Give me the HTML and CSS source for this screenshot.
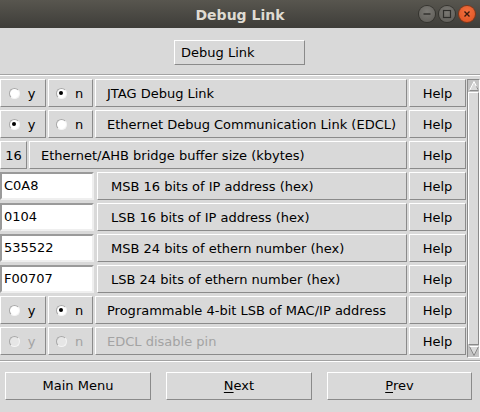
FILE: index.html
```html
<!DOCTYPE html>
<html>
<head>
<meta charset="utf-8">
<link rel="stylesheet" href="styles.css">
</head>
<body>
<div class="window">
  <div class="titlebar">
    <div></div>
    <div class="title">Debug Link</div>
    <div class="controls">
      <span class="wbtn min"><svg width="16" height="16" viewBox="0 0 16 16"><path d="M4.5 8h7" stroke="#2e2d2a" stroke-width="1.4"/></svg></span>
      <span class="wbtn max"><svg width="16" height="16" viewBox="0 0 16 16"><rect x="4.5" y="4.5" width="7" height="7" fill="none" stroke="#2e2d2a" stroke-width="1.2"/></svg></span>
      <span class="wbtn close"><svg width="16" height="16" viewBox="0 0 16 16"><path d="M5.5 5.5l5 5M10.5 5.5l-5 5" stroke="#3a1a0e" stroke-width="1.4"/></svg></span>
    </div>
  </div>

  <div class="header">
    <div class="hbtn">Debug Link</div>
  </div>
  <div class="sep"></div>

  <div class="content">
    <div class="rows">
      <div class="row">
        <div class="btn radio"><span class="rb"></span>y</div>
        <div class="btn radio"><span class="rb on"></span>n</div>
        <div class="btn label">JTAG Debug Link</div>
        <div class="btn help">Help</div>
      </div>
      <div class="row">
        <div class="btn radio"><span class="rb on"></span>y</div>
        <div class="btn radio"><span class="rb"></span>n</div>
        <div class="btn label">Ethernet Debug Communication Link (EDCL)</div>
        <div class="btn help">Help</div>
      </div>
      <div class="row">
        <div class="btn num">16</div>
        <div class="btn label wide">Ethernet/AHB bridge buffer size (kbytes)</div>
        <div class="btn help">Help</div>
      </div>
      <div class="row">
        <div class="entry">C0A8</div>
        <div class="btn label elabel">MSB 16 bits of IP address (hex)</div>
        <div class="btn help">Help</div>
      </div>
      <div class="row">
        <div class="entry">0104</div>
        <div class="btn label elabel">LSB 16 bits of IP address (hex)</div>
        <div class="btn help">Help</div>
      </div>
      <div class="row">
        <div class="entry">535522</div>
        <div class="btn label elabel">MSB 24 bits of ethern number (hex)</div>
        <div class="btn help">Help</div>
      </div>
      <div class="row">
        <div class="entry">F00707</div>
        <div class="btn label elabel">LSB 24 bits of ethern number (hex)</div>
        <div class="btn help">Help</div>
      </div>
      <div class="row">
        <div class="btn radio"><span class="rb"></span>y</div>
        <div class="btn radio"><span class="rb on"></span>n</div>
        <div class="btn label">Programmable 4-bit LSB of MAC/IP address</div>
        <div class="btn help">Help</div>
      </div>
      <div class="row">
        <div class="btn radio disabled"><span class="rb"></span>y</div>
        <div class="btn radio disabled"><span class="rb"></span>n</div>
        <div class="btn label disabled">EDCL disable pin</div>
        <div class="btn help">Help</div>
      </div>
    </div>
    <div class="scrollbar">
      <svg class="arrow" width="12" height="12" viewBox="0 0 12 12"><path d="M6 1.5L10.5 10.5H1.5Z" fill="#d9d9d9" stroke="#fff" stroke-width="1"/><path d="M6 1.5L10.5 10.5H1.5" fill="none" stroke="#8a8a8a" stroke-width="1" stroke-dasharray="0 5.5 20"/></svg>
      <div class="thumb"></div>
      <svg class="arrow" width="12" height="12" viewBox="0 0 12 12"><path d="M6 10.5L10.5 1.5H1.5Z" fill="#d9d9d9" stroke="#8a8a8a" stroke-width="1"/><path d="M1.5 1.5H10.5" stroke="#fff" stroke-width="1"/></svg>
    </div>
  </div>

  <div class="sep bottom"></div>
  <div class="footer">
    <div class="fbtn">Main Menu</div>
    <div class="fbtn"><u>N</u>ext</div>
    <div class="fbtn"><u>P</u>rev</div>
  </div>
</div>
</body>
</html>
```

FILE: styles.css
```css
* { box-sizing: border-box; }
html, body {
  margin: 0;
  padding: 0;
  width: 480px;
  height: 412px;
  overflow: hidden;
  background: #d9d9d9;
  font-family: "DejaVu Sans", "Liberation Sans", sans-serif;
  font-size: 13px;
  color: #000;
}
.window {
  width: 480px;
  height: 412px;
  display: flex;
  flex-direction: column;
}
.titlebar {
  height: 28px;
  flex: none;
  background: linear-gradient(#58564f, #3e3d39);
  display: grid;
  grid-template-columns: 1fr auto 1fr;
  align-items: center;
}
.title {
  color: #dfdbd2;
  font-weight: bold;
  font-size: 14px;
  padding-top: 1px;
}
.controls {
  justify-self: end;
  display: flex;
  gap: 4px;
  padding-right: 5px;
}
.wbtn {
  width: 16px;
  height: 16px;
  border-radius: 50%;
  display: block;
  background: radial-gradient(circle at 50% 35%, #7b7974, #5c5a55);
  box-shadow: 0 0 0 1px #35342f;
}
.wbtn svg { display: block; }
.wbtn.close {
  background: radial-gradient(circle at 50% 35%, #f2703f, #e0501f);
  box-shadow: 0 0 0 1px #8a3514;
}
.header {
  height: 46px;
  flex: none;
  display: flex;
  justify-content: center;
  align-items: center;
  padding-top: 2px;
}
.hbtn {
  width: 131px;
  height: 25px;
  border: 1px solid;
  border-color: #fff #8a8a8a #8a8a8a #fff;
  padding-left: 6px;
  display: flex;
  align-items: center;
  margin-left: -1px;
}
.sep {
  flex: none;
  height: 2px;
  border-top: 1px solid #a3a3a3;
  border-bottom: 1px solid #fff;
}
.content {
  flex: none;
  display: flex;
  padding-top: 3px;
  height: 283px;
}
.rows {
  width: 466px;
  display: flex;
  flex-direction: column;
  gap: 3px;
}
.row {
  height: 28px;
  display: flex;
  gap: 2px;
}
.btn {
  border: 1px solid;
  border-color: #fff #8a8a8a #8a8a8a #fff;
  display: flex;
  align-items: center;
  white-space: nowrap;
}
.radio {
  width: 46px;
  justify-content: center;
  gap: 8px;
  padding-right: 2px;
}
.radio + .radio { width: 45px; }
.rb {
  width: 11px;
  height: 11px;
  border-radius: 50%;
  background: #fff;
  border: 1px solid #b5b5b5;
  border-color: #a8a8a8 #f4f4f4 #f4f4f4 #a8a8a8;
  position: relative;
  flex: none;
}
.rb.on::after {
  content: "";
  position: absolute;
  left: 2.5px;
  top: 2.5px;
  width: 4px;
  height: 4px;
  border-radius: 50%;
  background: #000;
}
.disabled { color: #a3a3a3; }
.disabled .rb { background: #e6e6e6; }
.label {
  flex: 1;
  padding-left: 11px;
}
.label.wide { padding-left: 11px; }
.label.elabel { padding-left: 13px; margin-left: 1px; }
.num {
  width: 27px;
  justify-content: center;
}
.help {
  width: 57px;
  justify-content: center;
}
.entry {
  width: 94px;
  background: #fff;
  border: 2px solid;
  border-color: #9a9a9a #efefef #efefef #9a9a9a;
  padding-left: 2px;
  display: flex;
  align-items: center;
  padding-bottom: 2px;
}
.scrollbar {
  width: 13px;
  margin-left: 1px;
  height: 279px;
  border: 1px solid;
  border-color: #8a8a8a #fff #fff #8a8a8a;
  display: flex;
  flex-direction: column;
  background: #c3c3c3;
}
.arrow { display: block; flex: none; }
.thumb {
  flex: 1;
  background: #d9d9d9;
  border: 1px solid;
  border-color: #fff #8a8a8a #8a8a8a #fff;
}
.sep.bottom { margin-top: 1px; }
.footer {
  display: flex;
  gap: 15px;
  padding: 10px 0 0 5px;
}
.fbtn {
  width: 146px;
  height: 28px;
  border: 1px solid;
  border-color: #fff #8a8a8a #8a8a8a #fff;
  display: flex;
  align-items: center;
  justify-content: center;
  padding-bottom: 1px;
}
.fbtn + .fbtn + .fbtn { width: 145px; }
u { text-decoration-thickness: 1px; text-underline-offset: 2px; }
```
